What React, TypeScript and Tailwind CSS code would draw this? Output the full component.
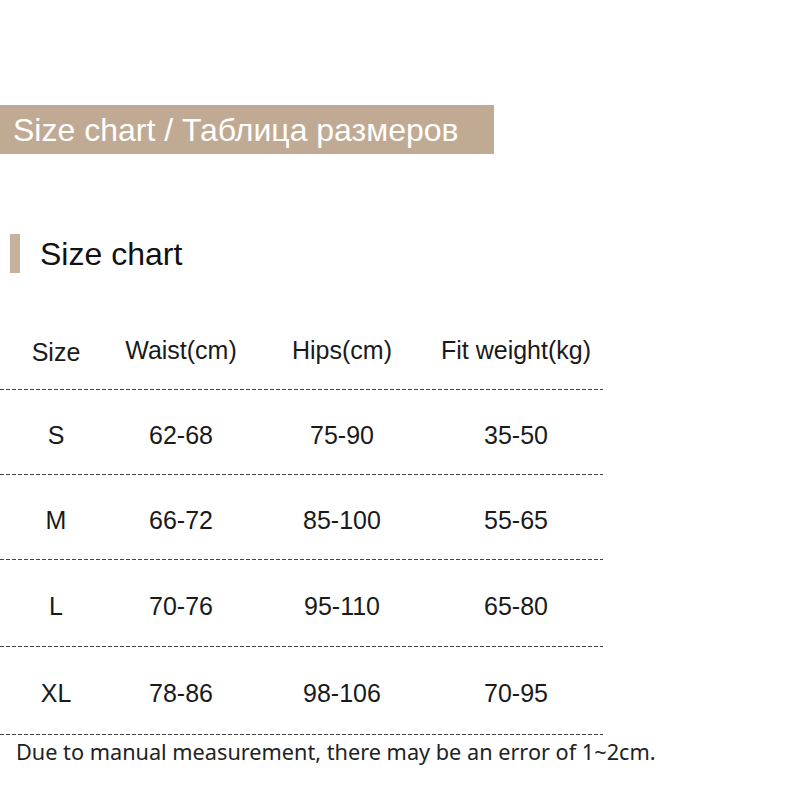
const rows = [
  { size: "S", waist: "62-68", hips: "75-90", weight: "35-50", h: "h-[84px]" },
  { size: "M", waist: "66-72", hips: "85-100", weight: "55-65", h: "h-[84px]" },
  { size: "L", waist: "70-76", hips: "95-110", weight: "65-80", h: "h-[86px]" },
  { size: "XL", waist: "78-86", hips: "98-106", weight: "70-95", h: "h-[87px]" },
];

function Dashed() {
  return <div className="h-px w-[603px] bg-[repeating-linear-gradient(to_right,#444_0_4px,transparent_4px_6px)]" />;
}

function Row({ cells, className }: { cells: string[]; className: string }) {
  return (
    <div className={`grid grid-cols-[112px_138px_184px_164px] items-center pt-[6px] ${className}`}>
      {cells.map((c, i) => (
        <div key={i} className="text-center">
          {c}
        </div>
      ))}
    </div>
  );
}

export default function App() {
  return (
    <div className="h-[800px] w-[800px] overflow-hidden bg-white font-['Liberation_Sans',Arial,sans-serif] text-[#1a1a1a]">
      <div className="h-[105px]" />
      <div className="flex h-[49px] w-[494px] items-center bg-[#c1aa93] pl-[13px] text-[32px] leading-none text-white">
        Size chart / Таблица размеров
      </div>

      <div className="mt-[80px] flex h-[39px] items-center">
        <div className="ml-[10px] h-[39px] w-[10px] bg-[#c6b29c]" />
        <div className="ml-[20px] text-[32px] leading-none text-[#111]">Size chart</div>
      </div>

      <div className="mt-[39px] text-[25px] leading-none">
        <div className="grid h-[77px] grid-cols-[112px_138px_184px_164px] items-center">
          <div className="pt-[4px] text-center">Size</div>
          <div className="text-center">Waist(cm)</div>
          <div className="text-center">Hips(cm)</div>
          <div className="text-center">Fit weight(kg)</div>
        </div>
        <Dashed />
        {rows.map((r) => (
          <div key={r.size}>
            <Row cells={[r.size, r.waist, r.hips, r.weight]} className={r.h} />
            <Dashed />
          </div>
        ))}
      </div>

      <div className="ml-[16px] mt-[3px] font-['Noto_Sans',sans-serif] text-[21.7px] leading-[28px] text-[#222]">
        Due to manual measurement, there may be an error of 1~2cm.
      </div>
    </div>
  );
}
